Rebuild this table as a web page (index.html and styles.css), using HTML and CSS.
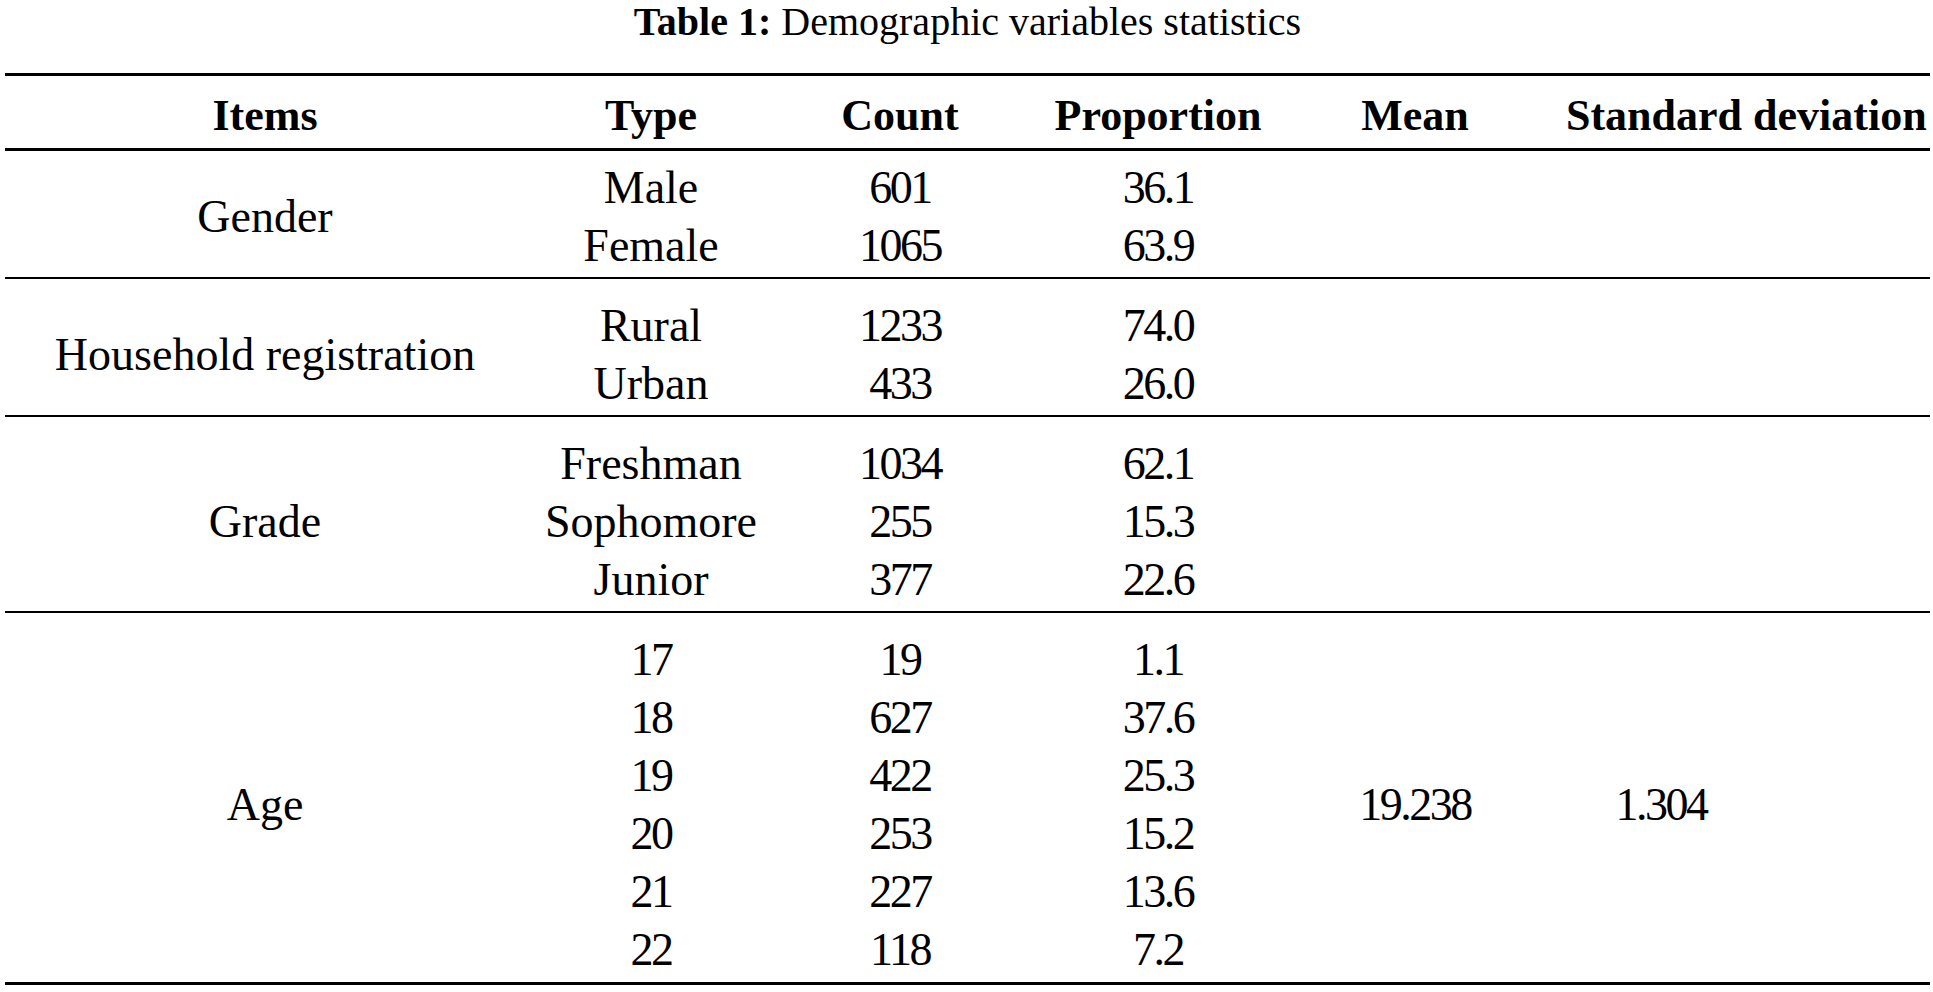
FILE: index.html
```html
<!DOCTYPE html>
<html lang="en">
<head>
<meta charset="utf-8">
<title>Table 1: Demographic variables statistics</title>
<link rel="stylesheet" href="styles.css">
</head>
<body>
<div class="page">
  <div class="caption"><b>Table 1:</b> Demographic variables statistics</div>
  <div class="table">
    <div class="row head">
      <div class="cell">Items</div>
      <div class="cell">Type</div>
      <div class="cell">Count</div>
      <div class="cell">Proportion</div>
      <div class="cell">Mean</div>
      <div class="cell sd-head">Standard deviation</div>
    </div>

    <div class="group first">
      <div class="cell item span2">Gender</div>
      <div class="cell">Male</div><div class="cell num">601</div><div class="cell num">36.1</div><div class="cell"></div><div class="cell"></div>
      <div class="cell">Female</div><div class="cell num">1065</div><div class="cell num">63.9</div><div class="cell"></div><div class="cell"></div>
    </div>

    <div class="group">
      <div class="cell item span2">Household registration</div>
      <div class="cell">Rural</div><div class="cell num">1233</div><div class="cell num">74.0</div><div class="cell"></div><div class="cell"></div>
      <div class="cell">Urban</div><div class="cell num">433</div><div class="cell num">26.0</div><div class="cell"></div><div class="cell"></div>
    </div>

    <div class="group">
      <div class="cell item span3">Grade</div>
      <div class="cell">Freshman</div><div class="cell num">1034</div><div class="cell num">62.1</div><div class="cell"></div><div class="cell"></div>
      <div class="cell">Sophomore</div><div class="cell num">255</div><div class="cell num">15.3</div><div class="cell"></div><div class="cell"></div>
      <div class="cell">Junior</div><div class="cell num">377</div><div class="cell num">22.6</div><div class="cell"></div><div class="cell"></div>
    </div>

    <div class="group last">
      <div class="cell item span6">Age</div>
      <div class="cell num">17</div><div class="cell num">19</div><div class="cell num">1.1</div>
      <div class="cell num stat mean span6">19.238</div>
      <div class="cell num stat sd span6">1.304</div>
      <div class="cell num">18</div><div class="cell num">627</div><div class="cell num">37.6</div>
      <div class="cell num">19</div><div class="cell num">422</div><div class="cell num">25.3</div>
      <div class="cell num">20</div><div class="cell num">253</div><div class="cell num">15.2</div>
      <div class="cell num">21</div><div class="cell num">227</div><div class="cell num">13.6</div>
      <div class="cell num">22</div><div class="cell num">118</div><div class="cell num">7.2</div>
    </div>
  </div>
</div>
</body>
</html>
```

FILE: styles.css
```css
html, body {
  margin: 0;
  padding: 0;
  background: #ffffff;
}

body {
  font-family: "Liberation Serif", "Times New Roman", serif;
  color: #000000;
  width: 1933px;
  height: 992px;
  overflow: hidden;
}

.page {
  padding-left: 5px;
}

.caption {
  font-size: 40px;
  line-height: 44px;
  height: 44px;
  text-align: center;
  width: 1925px;
  margin-bottom: 29px;
}

.caption b {
  font-weight: 700;
}

.table {
  width: 1925px;
  border-top: 3px solid #000;
  border-bottom: 3px solid #000;
}

.row,
.group {
  display: grid;
  grid-template-columns: 520px 252px 246px 270px 244px 248px;
}

.head {
  font-size: 44px;
  font-weight: 700;
  line-height: 58px;
  padding: 11px 0 3px;
  border-bottom: 3px solid #000;
}

.group {
  font-size: 46px;
  line-height: 58px;
  padding: 18px 0 2px;
  border-top: 2px solid #000;
  grid-auto-rows: 58px;
}

.group.first {
  border-top: none;
  padding-top: 8px;
}

.group.last {
  padding-bottom: 3px;
}

.cell {
  text-align: center;
  white-space: nowrap;
}

.num {
  letter-spacing: -2.5px;
}

.sd-head {
  text-align: left;
  padding-left: 29px;
}

.item {
  grid-column: 1;
  align-self: center;
}

.span2 { grid-row: 1 / span 2; }
.span3 { grid-row: 1 / span 3; }
.span6 { grid-row: 1 / span 6; }

.stat {
  align-self: center;
}

.mean { grid-column: 5; }
.sd { grid-column: 6; }
```
